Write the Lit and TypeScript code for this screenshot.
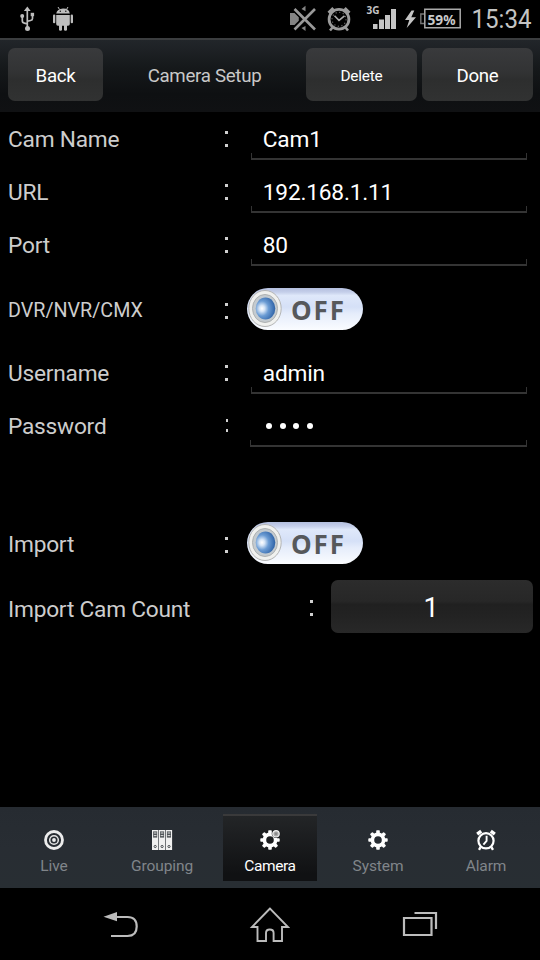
import { LitElement, html, css, svg } from "lit";
import { customElement, property } from "lit/decorators.js";

const gearTeeth = [0, 45, 90, 135, 180, 225, 270, 315];
const gear = svg`
  ${gearTeeth.map((a) => svg`<rect x="8.2" y="0.3" width="3.6" height="5" rx="0.8" fill="#fff" transform="rotate(${a} 10 10)"></rect>`)}
  <circle cx="10" cy="10" r="5.6" fill="none" stroke="#fff" stroke-width="3.6"></circle>`;

const tabIcons: Record<string, unknown> = {
  live: svg`<circle cx="10" cy="10" r="8.5" fill="none" stroke="#ececec" stroke-width="2.8"></circle>
    <circle cx="10" cy="10" r="4.3" fill="none" stroke="#e4e4e4" stroke-width="1.5"></circle>
    <circle cx="10" cy="10" r="1.9" fill="#eee"></circle>`,
  grouping: svg`${[0, 6.9, 13.8].map((x) => svg`
    <rect x=${x} y="0" width="6.3" height="20" fill="#f0f0f0"></rect>
    <rect x=${x + 1.1} y="1.4" width="4.1" height="6.2" fill="#51565a"></rect>
    <path d="M${x + 1.8} 3h2.7M${x + 1.8} 5.6h2.7" stroke="#dedede" stroke-width="1"></path>
    <circle cx=${x + 3.2} cy="16.5" r="1.1" fill="#fff" stroke="#34393d" stroke-width=".9"></circle>`)}`,
  camera: svg`${gear}<circle cx="16" cy="3.8" r="4.3" fill="#191b1d"></circle>
    <circle cx="16" cy="3.8" r="3.2" fill="#aaa" stroke="#f2f2f2" stroke-width="1.2"></circle>
    <circle cx="16" cy="3.8" r="1.3" fill="#888"></circle>`,
  system: gear,
  alarm: svg`<circle cx="10" cy="10.8" r="7.6" fill="none" stroke="#fff" stroke-width="2.2"></circle>
    <path d="M10.6 5.8V11L7.4 14.6" fill="none" stroke="#fff" stroke-width="1.9"></path>
    <path d="M1.2 4.2 5.2 1.2M14.8 1.2l4 3" stroke="#fff" stroke-width="3.4"></path>
    <path d="M4.6 17.2 3 19.8M15.4 17.2l1.6 2.6" stroke="#fff" stroke-width="2.4"></path>`,
};

@customElement("status-bar")
class StatusBar extends LitElement {
  static styles = css`
    :host { display: flex; height: 38px; box-sizing: border-box; background: #000; }
    .icons { display: block; }
    .g3 { font: 700 11px "Noto Sans", sans-serif; fill: #c4c4c4; }
    .pct { font: 700 15px "Noto Sans", sans-serif; fill: #c8c8c8; }
    .clock { font: 400 25.500px Roboto, sans-serif; fill: #c4c4c4; }
  `;
  render() {
    return html`<svg class="icons" width="540" height="38" viewBox="0 0 540 38">
      <g fill="none" stroke="#bdbdbd" stroke-width="1.7">
        <path d="M27.3 9v20M22.3 17v3.8q0 2 2 2.3l3 .8M32.5 15v3.500q0 1.700-2 2l-3 .8"></path>
      </g>
      <g fill="#bdbdbd">
        <path d="M27.3 6.500l3.400 4.500h-6.800z"></path>
        <circle cx="27.500" cy="28.500" r="2.500"></circle><circle cx="22.200" cy="16" r="2"></circle>
        <rect x="30.700" y="12.800" width="3.400" height="3.400"></rect>
        <path d="M56.200 13.500Q57 8.600 63 8.400T69.800 13.500z"></path>
        <path d="M56.200 15h13.600v9q0 1.700-1.700 1.700H57.900q-1.700 0-1.700-1.700z"></path>
        <rect x="53" y="14.500" width="2.300" height="8.800" rx="1.100"></rect>
        <rect x="70.700" y="14.500" width="2.300" height="8.800" rx="1.100"></rect>
        <rect x="59" y="24" width="3" height="6.800" rx="1.300"></rect>
        <rect x="64" y="24" width="3" height="6.800" rx="1.300"></rect>
      </g>
      <path d="M59.500 9.500 58 7M66.500 9.500 68 7" stroke="#bdbdbd" stroke-width="1"></path>
      <circle cx="60.300" cy="11.300" r=".7" fill="#111"></circle><circle cx="65.800" cy="11.300" r=".7" fill="#111"></circle>
      <path d="M290 13h4.500l4.300 4.300v3.400L294.500 25H290z" fill="#858585"></path>
      <path d="M301.500 9 305.500 5.800v5.500zM301.500 28l4 3v-5z" fill="#858585"></path>
      <path d="M294.500 9 315 29.500M315 9 294.500 29.500" stroke="#000" stroke-width="5"></path>
      <path d="M294.500 9 315 29.500M315 9 294.500 29.500" stroke="#999" stroke-width="2.600"></path>
      <circle cx="339" cy="19.300" r="9.900" fill="none" stroke="#9c9c9c" stroke-width="2.800"></circle>
      <circle cx="339" cy="19.300" r="7" fill="none" stroke="#666" stroke-width="1.200" stroke-dasharray="1.200 2.460"></circle>
      <path d="M334.500 15.800 339 20.300l5.500-4.500" fill="none" stroke="#aaa" stroke-width="1.600"></path>
      <path d="M328.700 13 333.500 8.300M344.500 8.300l4.800 4.700" stroke="#9c9c9c" stroke-width="3.400"></path>
      <path d="M332.500 27.500 330 30.500M345.500 27.500l2.500 3" stroke="#9c9c9c" stroke-width="2.600"></path>
      <text class="g3" x="366.500" y="14" textLength="13" lengthAdjust="spacingAndGlyphs">3G</text>
      <g fill="#c4c4c4">
        <rect x="373" y="24" width="4.500" height="5"></rect><rect x="379" y="19.500" width="5" height="9.500"></rect>
        <rect x="385" y="15" width="5" height="14"></rect><rect x="391" y="9" width="5" height="20"></rect>
        <path d="M411.500 10.500 405 20h4.300l-2.600 8L416 17.300h-4.700l3-6.800z"></path>
      </g>
      <path d="M424.800 9.200h35.400v18.600h-35.400z" fill="none" stroke="#aaa" stroke-width="1.500"></path>
      <path d="M424 14h-3.200v9.500h3.200" fill="none" stroke="#777" stroke-width="1.400"></path>
      <text class="pct" x="427.500" y="24.500" textLength="28" lengthAdjust="spacingAndGlyphs">59%</text>
      <text class="clock" x="471.500" y="28.300" textLength="60" lengthAdjust="spacingAndGlyphs">15:34</text>
    </svg>`;
  }
}

@customElement("off-switch")
class OffSwitch extends LitElement {
  static styles = css`
    :host {
      display: flex; align-items: center; box-sizing: border-box; width: 116px; height: 42px;
      border-radius: 21px; padding-left: 1px; margin-left: -4px;
      background: linear-gradient(#b4bfde 0, #c5cfea 10%, #dfe8fa 18%, #d5e0f7 45%, #e6edfb 62%, #fafcff 100%);
    }
    .knob { display: block; flex: none; }
    .word { font: 700 26px "Open Sans", "Noto Sans", sans-serif; line-height: 42px; letter-spacing: 1.900px; color: #56585b; margin-left: 9px; margin-top: 1px; }
  `;
  render() {
    return html`<svg class="knob" width="34" height="40" viewBox="0 0 34 40">
        <defs>
          <radialGradient id="ball" cx=".32" cy=".5" r=".68">
            <stop offset="0" stop-color="#fff"></stop><stop offset=".2" stop-color="#d7e6f7"></stop>
            <stop offset=".5" stop-color="#6b9cd4"></stop><stop offset="1" stop-color="#2e62a6"></stop>
          </radialGradient>
        </defs>
        <ellipse cx="17" cy="19.500" rx="16.200" ry="18" fill="#f0f1ef" stroke="#b4b5b5" stroke-width="1"></ellipse>
        <ellipse cx="17" cy="19.500" rx="12.500" ry="14" fill="#c4cbd0" stroke="#aeb1b1" stroke-width="1"></ellipse>
        <ellipse cx="17.500" cy="19.500" rx="9.800" ry="11" fill="url(#ball)"></ellipse>
      </svg><span class="word">OFF</span>`;
  }
}

@customElement("form-row")
class FormRow extends LitElement {
  @property() label = "";
  @property() kind = "";
  static styles = css`
    :host { display: grid; grid-template-columns: 215px 28px 1fr; align-items: center; height: 53px; padding-left: 8px; }
    .label { font-size: 22.700px; letter-spacing: -.22px; color: #cdcdcd; white-space: nowrap; padding-top: 2px; }
    .colon { display: flex; flex-direction: column; gap: 10px; padding-left: 2px; }
    .dot { width: 3px; height: 3px; background: #d0d0d0; }
    :host([kind="small"]) .label { font-size: 19.700px; letter-spacing: 0; }
    :host([kind="pass"]) .colon { gap: 7px; padding-left: 3px; }
    :host([kind="pass"]) .dot { width: 2px; }
    :host([kind="small"]) .colon, :host([kind="switch"]) .colon { padding-top: 3px; }
    :host([kind="count"]) { grid-template-columns: 300px 23px 1fr; }
    :host([kind="count"]) .label { padding-top: 6px; }
    :host([kind="count"]) .colon { padding-top: 2px; }
  `;
  render() {
    return html`<span class="label">${this.label}</span>
      <span class="colon" role="presentation"><i class="dot"></i><i class="dot"></i></span>
      <slot></slot>`;
  }
}

@customElement("text-entry")
class TextEntry extends LitElement {
  @property() value = "";
  @property({ type: Boolean }) secret = false;
  static styles = css`
    :host { display: block; height: 53px; }
    .text { height: 41px; line-height: 56px; padding-left: 11.800px; font-size: 22.700px; letter-spacing: -.2px; color: #fff; }
    .foot { height: 7px; box-sizing: border-box; width: 276px; border: solid #343434; border-width: 0 1px 2px; }
    .dots { display: flex; gap: 7.500px; padding: 24px 0 0 15px; height: 17px; }
    .dots i { width: 6px; height: 6px; border-radius: 3px; background: #fff; }
    .dots + .foot { width: 277px; margin-left: -1px; }
  `;
  render() {
    return html`${this.secret
      ? html`<div class="dots">${[1, 2, 3, 4].map(() => html`<i></i>`)}</div>`
      : html`<div class="text">${this.value}</div>`}
      <div class="foot"></div>`;
  }
}

@customElement("app-root")
class AppRoot extends LitElement {
  static styles = css`
    :host { display: flex; flex-direction: column; width: 540px; height: 960px; background: #000; font-family: Roboto, sans-serif; overflow: hidden; }
    .header {
      display: grid; grid-template-columns: 95px 203px 111px 111px; column-gap: 0; height: 74px; box-sizing: border-box;
      padding: 8px 7px 11px 8px; border-top: 2px solid #3b3d3f;
      background: linear-gradient(#22262a, #15181a 40%, #0e1012 75%, #101113);
    }
    .btn { display: flex; align-items: center; justify-content: center; border-radius: 7px; color: #fff; background: linear-gradient(#393a3c, #323334 45%, #2d2e2e 60%, #313232); font-size: 18.700px; letter-spacing: -.3px; padding-top: 2px; }
    .delete { font-size: 15.400px; letter-spacing: -.2px; }
    .done { margin-left: 5px; margin-right: -5px; }
    .title { display: flex; align-items: center; justify-content: center; font-size: 18.700px; letter-spacing: -.3px; color: #c8c8c8; padding-top: 3px; }
    .form { display: flex; flex-direction: column; height: 695px; box-sizing: border-box; padding-right: 7px; color: #fff; }
    .tall { height: 75px; padding-top: 1px; box-sizing: border-box; }
    .import { height: 56px; margin-top: 63px; }
    .count { margin-top: 9px; }
    .countbtn { display: flex; align-items: center; justify-content: center; height: 53px; border-radius: 7px; font-size: 27px; color: #fff; background: linear-gradient(#2c2c2c, #272727 40%, #202020 46%, #232323 70%, #282828); box-sizing: border-box; padding: 2px 2px 0 0; }
    .tabs { display: grid; grid-template-columns: repeat(5, 108px); height: 81px; background: linear-gradient(#262b31, #282d33 50%, #282e33); padding-top: 7px; box-sizing: border-box; }
    .tab { display: flex; flex-direction: column; align-items: center; height: 67px; box-sizing: border-box; padding-top: 16px; margin: 0 7px; font-size: 15.500px; letter-spacing: -.1px; color: #80858a; line-height: 18px; gap: 7px; }
    .tab svg { overflow: visible; }
    .active { color: #fff; border-top: 2px solid #3a3a3b; padding-top: 14px; background: linear-gradient(#232527, #101113 90%); letter-spacing: -.4px; }
    .nav { display: block; }
  `;
  render() {
    const tabs = [["live", "Live"], ["grouping", "Grouping"], ["camera", "Camera"], ["system", "System"], ["alarm", "Alarm"]];
    return html`
      <status-bar></status-bar>
      <div class="header">
        <div class="btn">Back</div>
        <div class="title">Camera Setup</div>
        <div class="btn delete">Delete</div>
        <div class="btn done">Done</div>
      </div>
      <div class="form">
        <form-row label="Cam Name"><text-entry value="Cam1"></text-entry></form-row>
        <form-row label="URL"><text-entry value="192.168.1.11"></text-entry></form-row>
        <form-row label="Port"><text-entry value="80"></text-entry></form-row>
        <form-row class="tall" kind="small" label="DVR/NVR/CMX"><off-switch></off-switch></form-row>
        <form-row label="Username"><text-entry value="admin"></text-entry></form-row>
        <form-row kind="pass" label="Password"><text-entry secret></text-entry></form-row>
        <form-row class="import" kind="switch" label="Import"><off-switch></off-switch></form-row>
        <form-row class="count" kind="count" label="Import Cam Count"><div class="countbtn">1</div></form-row>
      </div>
      <div class="tabs">
        ${tabs.map(([id, name]) => html`<div class="tab ${id === "camera" ? "active" : ""}">
          <svg width="20" height="20" viewBox="0 0 20 20">${tabIcons[id]}</svg><span>${name}</span>
        </div>`)}
      </div>
      <svg class="nav" width="540" height="72" viewBox="0 888 540 72" fill="none" stroke="#bcbcbc" stroke-width="2.200">
        <path d="M116 917h11.500q9.200 0 9.200 9.500t-9.200 9.500H111"></path>
        <path d="M103.500 916.800 117 912v9.300z" fill="#bcbcbc" stroke="none"></path>
        <path d="M270 908.500 252 927h5.500v14h8.500v-8q0-3.500 3.800-3.500t3.800 3.500v8H282v-14h6z" stroke-width="1.900"></path>
        <path d="M404 918h27.500v17H404zM414.500 913h21.500v16"></path>
      </svg>`;
  }
}
